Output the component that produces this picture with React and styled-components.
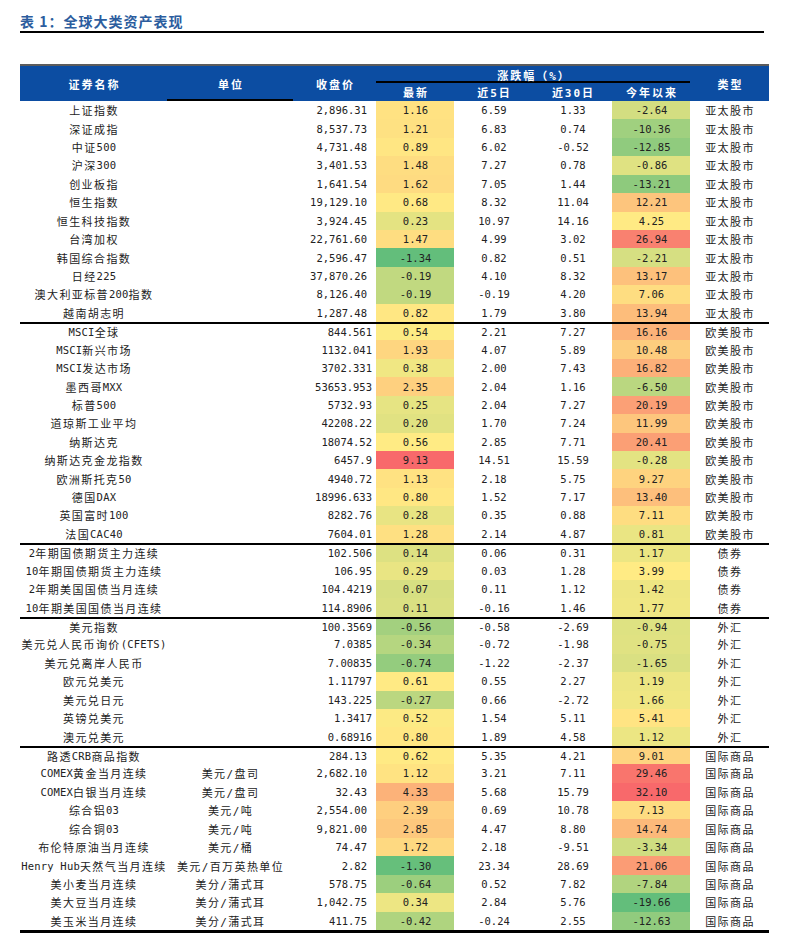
import styled, {createGlobalStyle} from "styled-components"

const COLS = "147px 126px 83px 78px 79px 79px 78px 79px"
const FONT = `"DejaVu Sans Mono", "Noto Sans CJK SC", monospace`

const GlobalStyle = createGlobalStyle`
    body {
        margin: 0;
        background: white;
    }
`

const Page = styled.div`
    padding: 12px 0 0 20px;
`

const Title = styled.h1`
    width: 744px;
    margin: 0 0 31px 0;
    padding-bottom: 1px;
    border-bottom: 2px solid #000;
    font-family: "Noto Sans CJK SC", sans-serif;
    font-size: 14px;
    line-height: 18px;
    font-weight: 700;
    letter-spacing: 1px;
    color: #2c5d9e;
`

const Table = styled.div`
    width: 749px;
    border-bottom: 3px solid #000;
`

const Head = styled.div`
    display: grid;
    grid-template-columns: ${COLS};
    grid-template-rows: 17px 18px;
    background: #0c4da2;
    border-top: 2px solid #5c5c5c;
`

const HeadCell = styled.div`
    grid-column: ${({$col}) => $col};
    grid-row: ${({$row}) => $row};
    display: flex;
    align-items: center;
    justify-content: center;
    padding-left: 2px;
    font-family: ${FONT};
    font-size: 11px;
    font-weight: 700;
    letter-spacing: 2px;
    color: white;
    ${({$line}) => $line && "box-shadow: inset 0 -2px 0 #000;"}
`

const Row = styled.div`
    display: grid;
    grid-template-columns: ${COLS};
    height: 18.43px;
    box-sizing: border-box;
    ${({$split}) => $split && "border-top: 2px solid #000;"}
`

const Cell = styled.div`
    display: flex;
    align-items: center;
    justify-content: ${({$align}) => $align || "center"};
    padding: ${({$pad}) => $pad || "0 0 0 1px"};
    white-space: nowrap;
    font-family: ${FONT};
    font-size: ${({$num}) => $num ? "10.5px" : "11px"};
    letter-spacing: ${({$num}) => $num ? "0" : "1.4px"};
    color: #222;
`

const Latin = styled.span`
    font-size: 10.5px;
    letter-spacing: 0.2px;
`

const groups = [
    {type: "亚太股市", wide: true, rows: [
        ["上证指数", "", "2,896.31", 1.16, 6.59, 1.33, -2.64],
        ["深证成指", "", "8,537.73", 1.21, 6.83, 0.74, -10.36],
        ["中证500", "", "4,731.48", 0.89, 6.02, -0.52, -12.85],
        ["沪深300", "", "3,401.53", 1.48, 7.27, 0.78, -0.86],
        ["创业板指", "", "1,641.54", 1.62, 7.05, 1.44, -13.21],
        ["恒生指数", "", "19,129.10", 0.68, 8.32, 11.04, 12.21],
        ["恒生科技指数", "", "3,924.45", 0.23, 10.97, 14.16, 4.25],
        ["台湾加权", "", "22,761.60", 1.47, 4.99, 3.02, 26.94],
        ["韩国综合指数", "", "2,596.47", -1.34, 0.82, 0.51, -2.21],
        ["日经225", "", "37,870.26", -0.19, 4.10, 8.32, 13.17],
        ["澳大利亚标普200指数", "", "8,126.40", -0.19, -0.19, 4.20, 7.06],
        ["越南胡志明", "", "1,287.48", 0.82, 1.79, 3.80, 13.94],
    ]},
    {type: "欧美股市", rows: [
        ["MSCI全球", "", "844.561", 0.54, 2.21, 7.27, 16.16],
        ["MSCI新兴市场", "", "1132.041", 1.93, 4.07, 5.89, 10.48],
        ["MSCI发达市场", "", "3702.331", 0.38, 2.00, 7.43, 16.82],
        ["墨西哥MXX", "", "53653.953", 2.35, 2.04, 1.16, -6.50],
        ["标普500", "", "5732.93", 0.25, 2.04, 7.27, 20.19],
        ["道琼斯工业平均", "", "42208.22", 0.20, 1.70, 7.24, 11.99],
        ["纳斯达克", "", "18074.52", 0.56, 2.85, 7.71, 20.41],
        ["纳斯达克金龙指数", "", "6457.9", 9.13, 14.51, 15.59, -0.28],
        ["欧洲斯托克50", "", "4940.72", 1.13, 2.18, 5.75, 9.27],
        ["德国DAX", "", "18996.633", 0.80, 1.52, 7.17, 13.40],
        ["英国富时100", "", "8282.76", 0.28, 0.35, 0.88, 7.11],
        ["法国CAC40", "", "7604.01", 1.28, 2.14, 4.87, 0.81],
    ]},
    {type: "债券", rows: [
        ["2年期国债期货主力连续", "", "102.506", 0.14, 0.06, 0.31, 1.17],
        ["10年期国债期货主力连续", "", "106.95", 0.29, 0.03, 1.28, 3.99],
        ["2年期美国国债当月连续", "", "104.4219", 0.07, 0.11, 1.12, 1.42],
        ["10年期美国国债当月连续", "", "114.8906", 0.11, -0.16, 1.46, 1.77],
    ]},
    {type: "外汇", rows: [
        ["美元指数", "", "100.3569", -0.56, -0.58, -2.69, -0.94],
        ["美元兑人民币询价(CFETS)", "", "7.0385", -0.34, -0.72, -1.98, -0.75],
        ["美元兑离岸人民币", "", "7.00835", -0.74, -1.22, -2.37, -1.65],
        ["欧元兑美元", "", "1.11797", 0.61, 0.55, 2.27, 1.19],
        ["美元兑日元", "", "143.225", -0.27, 0.66, -2.72, 1.66],
        ["英镑兑美元", "", "1.3417", 0.52, 1.54, 5.11, 5.41],
        ["澳元兑美元", "", "0.68916", 0.80, 1.89, 4.58, 1.12],
    ]},
    {type: "国际商品", wide: true, rows: [
        ["路透CRB商品指数", "", "284.13", 0.62, 5.35, 4.21, 9.01],
        ["COMEX黄金当月连续", "美元/盘司", "2,682.10", 1.12, 3.21, 7.11, 29.46],
        ["COMEX白银当月连续", "美元/盘司", "32.43", 4.33, 5.68, 15.79, 32.10],
        ["综合铝03", "美元/吨", "2,554.00", 2.39, 0.69, 10.78, 7.13],
        ["综合铜03", "美元/吨", "9,821.00", 2.85, 4.47, 8.80, 14.74],
        ["布伦特原油当月连续", "美元/桶", "74.47", 1.72, 2.18, -9.51, -3.34],
        ["Henry Hub天然气当月连续", "美元/百万英热单位", "2.82", -1.30, 23.34, 28.69, 21.06],
        ["美小麦当月连续", "美分/蒲式耳", "578.75", -0.64, 0.52, 7.82, -7.84],
        ["美大豆当月连续", "美分/蒲式耳", "1,042.75", 0.34, 2.84, 5.76, -19.66],
        ["美玉米当月连续", "美分/蒲式耳", "411.75", -0.42, -0.24, 2.55, -12.63],
    ]},
]

// excel style 3-colour scale: min green, median yellow, max red
const GREEN = [99, 190, 123]
const YELLOW = [255, 235, 132]
const RED = [248, 105, 107]

const makeScale = (values) => {
    const sorted = [...values].sort((a, b) => a - b)
    const min = sorted[0]
    const max = sorted[sorted.length - 1]
    const mid = sorted[Math.floor(sorted.length / 2)]
    return (v) => {
        let from, to, t
        if (v <= mid) {
            from = GREEN; to = YELLOW; t = (v - min) / (mid - min)
        } else {
            from = YELLOW; to = RED; t = (v - mid) / (max - mid)
        }
        const c = from.map((x, i) => Math.round(x + (to[i] - x) * t))
        return `rgb(${c.join(",")})`
    }
}

const allRows = groups.flatMap(g => g.rows)
const latestColor = makeScale(allRows.map(r => r[3]))
const ytdColor = makeScale(allRows.map(r => r[6]))

const fmt = (v) => v.toFixed(2)

// latin / digit runs inside chinese names are set tighter
const Name = ({text}) =>
    text.split(/([A-Za-z0-9() ]+)/).map((part, i) =>
        /[A-Za-z0-9]/.test(part) ? <Latin key={i}>{part}</Latin> : part
    )

export default function App() {
    return (
        <Page>
            <GlobalStyle />
            <Title>表 1：全球大类资产表现</Title>
            <Table>
                <Head>
                    <HeadCell $col="1" $row="1 / 3">证券名称</HeadCell>
                    <HeadCell $col="2" $row="1 / 3" $line>单位</HeadCell>
                    <HeadCell $col="3" $row="1 / 3">收盘价</HeadCell>
                    <HeadCell $col="4 / 8" $row="1" $line>涨跌幅（%）</HeadCell>
                    <HeadCell $col="4" $row="2">最新</HeadCell>
                    <HeadCell $col="5" $row="2">近5日</HeadCell>
                    <HeadCell $col="6" $row="2">近30日</HeadCell>
                    <HeadCell $col="7" $row="2">今年以来</HeadCell>
                    <HeadCell $col="8" $row="1 / 3">类型</HeadCell>
                </Head>
                {groups.map((g, gi) =>
                    g.rows.map((r, ri) => (
                        <Row key={r[0]} $split={gi > 0 && ri === 0}>
                            <Cell><Name text={r[0]} /></Cell>
                            <Cell>{r[1]}</Cell>
                            <Cell $num $align="flex-end" $pad={g.wide ? "0 9px 0 0" : "0 4px 0 0"}>{r[2]}</Cell>
                            <Cell $num style={{background: latestColor(r[3])}}>{fmt(r[3])}</Cell>
                            <Cell $num>{fmt(r[4])}</Cell>
                            <Cell $num>{fmt(r[5])}</Cell>
                            <Cell $num style={{background: ytdColor(r[6])}}>{fmt(r[6])}</Cell>
                            <Cell>{g.type}</Cell>
                        </Row>
                    ))
                )}
            </Table>
        </Page>
    )
}
